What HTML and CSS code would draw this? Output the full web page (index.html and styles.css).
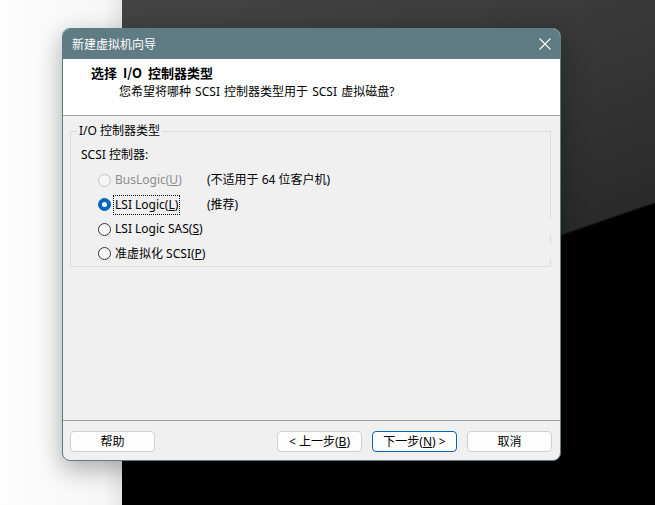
FILE: index.html
```html
<!DOCTYPE html>
<html lang="zh-CN">
<head>
<meta charset="utf-8">
<title>新建虚拟机向导</title>
<link rel="stylesheet" href="styles.css">
</head>
<body>
<div class="desktop">
  <div class="desk-left"></div>
  <div class="desk-right"></div>

  <div class="dialog">
    <div class="titlebar">
      <span class="title-text">新建虚拟机向导</span>
      <svg class="close" width="12" height="12" viewBox="0 0 12 12"><path d="M0.5 0.5 L11.5 11.5 M11.5 0.5 L0.5 11.5" stroke="#ffffff" stroke-width="1.1" fill="none"/></svg>
    </div>
    <div class="header">
      <div class="h-title">选择 I/O 控制器类型</div>
      <div class="h-sub">您希望将哪种 SCSI 控制器类型用于 SCSI 虚拟磁盘?</div>
    </div>
    <div class="body">
      <div class="group">
        <div class="legend">I/O 控制器类型</div>
        <div class="group-label">SCSI 控制器:</div>
        <div class="row">
          <div class="opt disabled"><span class="radio"></span><span class="lbl">BusLogic(<u>U</u>)</span></div>
          <div class="note">(不适用于 64 位客户机)</div>
        </div>
        <div class="row">
          <div class="opt"><span class="radio checked"></span><span class="lbl focus">LSI Logic(<u>L</u>)</span></div>
          <div class="note">(推荐)</div>
        </div>
        <div class="row">
          <div class="opt"><span class="radio"></span><span class="lbl">LSI Logic SAS(<u>S</u>)</span></div>
        </div>
        <div class="row">
          <div class="opt"><span class="radio"></span><span class="lbl">准虚拟化 SCSI(<u>P</u>)</span></div>
        </div>
      </div>
    </div>
    <div class="footer">
      <button class="btn">帮助</button>
      <div class="spacer"></div>
      <button class="btn">&lt; 上一步(<u>B</u>)</button>
      <button class="btn primary">下一步(<u>N</u>) &gt;</button>
      <button class="btn">取消</button>
    </div>
  </div>
</div>
</body>
</html>
```
FILE: styles.css
```css
* { box-sizing: border-box; }
html, body { margin: 0; padding: 0; }
body {
  width: 655px;
  height: 505px;
  overflow: hidden;
  font-family: "Noto Sans", "Noto Sans CJK SC", sans-serif;
  font-size: 12px;
  line-height: 16px;
  color: #000;
}
.desktop {
  position: relative;
  width: 655px;
  height: 505px;
  display: flex;
}
.desk-left {
  width: 122px;
  background: linear-gradient(to right, #fdfdfd 0, #f7f7f7 85%, #e6e6e6 100%);
}
.desk-right {
  flex: 1;
  background: linear-gradient(161deg, #444444 0, #3a3a3a 160px, #2a2a2a 364px, #000000 366.5px, #000000 100%);
}
.dialog {
  position: absolute;
  left: 62px;
  top: 28px;
  width: 499px;
  height: 433px;
  border: 1px solid #5f7c85;
  border-radius: 8px;
  overflow: hidden;
  background: #f0f0f0;
  box-shadow: 0 8px 26px rgba(0, 0, 0, 0.32);
  display: flex;
  flex-direction: column;
}
.titlebar {
  height: 30px;
  background: #5f7c85;
  color: #ffffff;
  display: flex;
  align-items: center;
  justify-content: space-between;
  padding: 0 9px 0 9px;
  flex: none;
}
.title-text {
  font-family: "Noto Sans CJK SC", sans-serif;
  font-size: 12px;
  line-height: 16px;
}
.close { display: block; }
.header {
  height: 57px;
  background: #ffffff;
  border-bottom: 1px solid #a0a0a0;
  padding: 6px 0 0 28px;
  flex: none;
}
.h-title {
  font-family: "Noto Sans CJK SC", sans-serif;
  font-weight: 700;
  font-size: 13px;
  line-height: 16px;
  word-spacing: 3px;
}
.h-sub {
  line-height: 16px;
  margin: 3px 0 0 28px;
  word-spacing: 1px;
}
.body {
  height: 305px;
  flex: none;
  padding: 15px 0 0 7px;
  border-bottom: 1px solid #a0a0a0;
}
.group {
  width: 481px;
  height: 136px;
  border: 1px solid #dcdcdc;
  border-right: none;
  background: linear-gradient(to bottom, #dcdcdc 0, #dcdcdc 87px, transparent 87px, transparent 102px, #dcdcdc 102px, #dcdcdc 112px, transparent 112px, transparent 127px, #dcdcdc 127px) no-repeat right top / 1px 100%;
  padding: 0 0 0 10px;
}
.legend {
  display: block;
  width: max-content;
  margin: -9px 0 0 -4px;
  padding: 0 2px;
  background: #f0f0f0;
  line-height: 16px;
}
.group-label {
  line-height: 16px;
  margin-top: 8px;
}
.row {
  height: 24.5px;
  display: flex;
  align-items: center;
  padding-left: 17px;
}
.group-label + .row { margin-top: 5px; }
.opt {
  width: 109px;
  display: flex;
  align-items: center;
  flex: none;
}
.radio {
  width: 13px;
  height: 13px;
  border-radius: 50%;
  border: 1px solid #333333;
  background: #f8f8f8;
  flex: none;
  margin-right: 2px;
  position: relative;
}
.radio.checked {
  background: #0067c0;
  border-color: #0067c0;
}
.radio.checked::after {
  content: "";
  position: absolute;
  left: 3px;
  top: 3px;
  width: 5px;
  height: 5px;
  border-radius: 50%;
  background: #ffffff;
}
.disabled .radio {
  border-color: #c4c4c4;
  background: #f5f5f5;
}
.disabled .lbl { color: #8d8d8d; }
.lbl {
  line-height: 16px;
  padding: 1px 1px;
  border: 1px solid transparent;
  white-space: nowrap;
}
.lbl.focus { border: 1px dotted #000000; }
.note {
  line-height: 16px;
  white-space: nowrap;
}
.footer {
  flex: none;
  height: 39px;
  padding: 10px 8px 0 7px;
  display: flex;
  align-items: flex-start;
  gap: 10px;
}
.spacer { flex: 1; }
.btn {
  width: 85px;
  height: 21px;
  border: 1px solid #d0d0d0;
  border-radius: 4px;
  background: #fdfdfd;
  font-family: "Noto Sans", "Noto Sans CJK SC", sans-serif;
  font-size: 12px;
  color: #000;
  padding: 0;
  line-height: 17px;
}
.btn.primary {
  border-color: #0067c0;
}
```
